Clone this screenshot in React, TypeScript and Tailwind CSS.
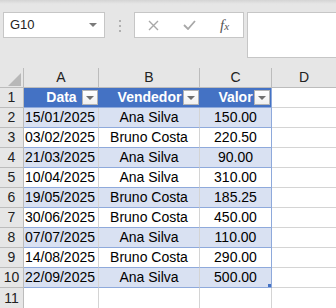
import React from 'react';

type Row = { data: string; vendedor: string; valor: string };

const rows: Row[] = [
  { data: '15/01/2025', vendedor: 'Ana Silva', valor: '150.00' },
  { data: '03/02/2025', vendedor: 'Bruno Costa', valor: '220.50' },
  { data: '21/03/2025', vendedor: 'Ana Silva', valor: '90.00' },
  { data: '10/04/2025', vendedor: 'Ana Silva', valor: '310.00' },
  { data: '19/05/2025', vendedor: 'Bruno Costa', valor: '185.25' },
  { data: '30/06/2025', vendedor: 'Bruno Costa', valor: '450.00' },
  { data: '07/07/2025', vendedor: 'Ana Silva', valor: '110.00' },
  { data: '14/08/2025', vendedor: 'Bruno Costa', valor: '290.00' },
  { data: '22/09/2025', vendedor: 'Ana Silva', valor: '500.00' },
];

const FilterButton = () => (
  <span className="absolute right-[1px] top-[2px] flex h-[15px] w-[16px] items-center justify-center border border-[#b4b4b4] bg-gradient-to-b from-white to-[#f0f0f0]">
    <svg width="8" height="4" viewBox="0 0 8 4">
      <path d="M0 0 L8 0 L4 4 Z" fill="#707070" />
    </svg>
  </span>
);

export default function App() {
  return (
    <div className="h-[308px] w-[336px] overflow-hidden bg-[#e6e6e6] font-['Liberation_Sans',Arial,sans-serif] text-[14px] text-black">
      {/* formula bar */}
      <div className="h-[68px] bg-gradient-to-b from-[#d4d4d4] via-[#e6e6e6] to-[#e6e6e6] [background-size:100%_8px] bg-no-repeat bg-[#e6e6e6]">
        <div className="flex items-start pt-[12px]">
          <div className="ml-[3px] flex h-[26px] w-[102px] items-center justify-between border border-[#c6c6c6] bg-white pl-[6px] pr-[7px] text-[13px] text-[#222]">
            <span>G10</span>
            <svg width="8" height="4" viewBox="0 0 8 4">
              <path d="M0 0 L8 0 L4 4 Z" fill="#7a7a7a" />
            </svg>
          </div>
          <div className="ml-[14px] mt-[8px] flex flex-col gap-[3px]">
            <span className="h-[2px] w-[2px] bg-[#b0b0b0]" />
            <span className="h-[2px] w-[2px] bg-[#b0b0b0]" />
            <span className="h-[2px] w-[2px] bg-[#b0b0b0]" />
          </div>
          <div className="ml-[13px] flex h-[26px] w-[110px] items-center border border-[#c6c6c6] bg-white">
            <svg className="ml-[13px]" width="11" height="11" viewBox="0 0 11 11">
              <path d="M1 1 L10 10 M10 1 L1 10" stroke="#a8a8a8" strokeWidth="1.4" fill="none" />
            </svg>
            <svg className="ml-[24px]" width="13" height="10" viewBox="0 0 13 10">
              <path d="M1 5 L5 9 L12 1" stroke="#a8a8a8" strokeWidth="1.8" fill="none" />
            </svg>
            <span className="ml-[24px] font-['Liberation_Serif',serif] text-[15px] italic text-[#555]">
              f<span className="text-[11px]">x</span>
            </span>
          </div>
          <div className="ml-[3px] h-[46px] flex-1 border border-r-0 border-[#c6c6c6] bg-white" />
        </div>
      </div>

      {/* column headers */}
      <div className="flex h-[20px] text-[#222]">
        <div className="relative w-[24px] border-r border-b border-[#bcbcbc]">
          <svg className="absolute left-[8px] top-[5px]" width="13" height="13" viewBox="0 0 13 13">
            <path d="M13 0 L13 13 L0 13 Z" fill="#b8b8b8" />
          </svg>
        </div>
        <div className="flex w-[75px] items-center justify-center border-r border-b border-[#bcbcbc]">A</div>
        <div className="flex w-[101px] items-center justify-center border-r border-b border-[#bcbcbc]">B</div>
        <div className="flex w-[72px] items-center justify-center border-r border-b border-[#bcbcbc]">C</div>
        <div className="flex w-[64px] items-center justify-center border-b border-[#bcbcbc]">D</div>
      </div>

      {/* table header row */}
      <div className="flex h-[20px]">
        <div className="flex w-[24px] items-center justify-center border-r border-b border-[#bcbcbc] text-[#222]">1</div>
        <div className="relative flex w-[75px] items-center justify-center border-b border-[#8ea9db] bg-[#4472c4] font-bold text-white">
          Data
          <FilterButton />
        </div>
        <div className="relative flex w-[101px] items-center justify-center border-b border-[#8ea9db] bg-[#4472c4] font-bold text-white">
          Vendedor
          <FilterButton />
        </div>
        <div className="relative flex w-[72px] items-center justify-center border-r border-b border-[#8ea9db] bg-[#4472c4] font-bold text-white">
          Valor
          <FilterButton />
        </div>
        <div className="w-[64px] border-b border-[#d4d4d4] bg-white" />
      </div>

      {/* data rows */}
      {rows.map((r, i) => {
        const band = i % 2 === 0 ? 'bg-[#d9e1f2]' : 'bg-white';
        const last = i === rows.length - 1;
        return (
          <div key={r.data} className="flex h-[20px]">
            <div className="flex w-[24px] items-center justify-center border-r border-b border-[#bcbcbc] text-[#222]">{i + 2}</div>
            <div className={`flex w-[75px] items-center justify-end border-r border-b border-r-[#d4d4d4] border-b-[#8ea9db] pr-[3px] ${band}`}>{r.data}</div>
            <div className={`flex w-[101px] items-center justify-center border-r border-b border-r-[#d4d4d4] border-b-[#8ea9db] ${band}`}>{r.vendedor}</div>
            <div className={`relative flex w-[72px] items-center justify-center border-r border-b border-[#8ea9db] ${band}`}>
              {r.valor}
              {last && <span className="absolute bottom-[0px] right-[0px] h-[3px] w-[3px] bg-[#4472c4]" />}
            </div>
            <div className="w-[64px] border-b border-[#d4d4d4] bg-white" />
          </div>
        );
      })}

      {/* row 11 */}
      <div className="flex h-[20px]">
        <div className="flex w-[24px] items-center justify-center border-r border-[#bcbcbc] text-[#222]">11</div>
        <div className="w-[75px] border-r border-[#d4d4d4] bg-white" />
        <div className="w-[101px] border-r border-[#d4d4d4] bg-white" />
        <div className="w-[72px] border-r border-[#d4d4d4] bg-white" />
        <div className="w-[64px] bg-white" />
      </div>
    </div>
  );
}
